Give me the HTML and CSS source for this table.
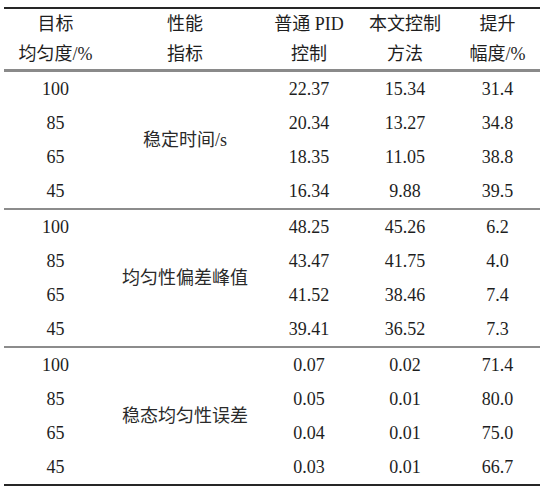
FILE: index.html
```
<!DOCTYPE html>
<html lang="zh">
<head>
<meta charset="utf-8">
<link rel="stylesheet" href="styles.css">
</head>
<body>
<table class="tbl">
  <colgroup>
    <col class="c1"><col class="c2"><col class="c3"><col class="c4"><col class="c5">
  </colgroup>
  <thead>
    <tr class="hrow">
      <th>目标<br>均匀度/%</th>
      <th>性能<br>指标</th>
      <th>普通 PID<br>控制</th>
      <th>本文控制<br>方法</th>
      <th>提升<br>幅度/%</th>
    </tr>
  </thead>
  <tbody class="grp">
    <tr><td>100</td><td rowspan="4" class="lbl">稳定时间/s</td><td>22.37</td><td>15.34</td><td>31.4</td></tr>
    <tr><td>85</td><td>20.34</td><td>13.27</td><td>34.8</td></tr>
    <tr><td>65</td><td>18.35</td><td>11.05</td><td>38.8</td></tr>
    <tr><td>45</td><td>16.34</td><td>9.88</td><td>39.5</td></tr>
  </tbody>
  <tbody class="grp">
    <tr><td>100</td><td rowspan="4" class="lbl">均匀性偏差峰值</td><td>48.25</td><td>45.26</td><td>6.2</td></tr>
    <tr><td>85</td><td>43.47</td><td>41.75</td><td>4.0</td></tr>
    <tr><td>65</td><td>41.52</td><td>38.46</td><td>7.4</td></tr>
    <tr><td>45</td><td>39.41</td><td>36.52</td><td>7.3</td></tr>
  </tbody>
  <tbody class="grp last">
    <tr><td>100</td><td rowspan="4" class="lbl">稳态均匀性误差</td><td>0.07</td><td>0.02</td><td>71.4</td></tr>
    <tr><td>85</td><td>0.05</td><td>0.01</td><td>80.0</td></tr>
    <tr><td>65</td><td>0.04</td><td>0.01</td><td>75.0</td></tr>
    <tr><td>45</td><td>0.03</td><td>0.01</td><td>66.7</td></tr>
  </tbody>
</table>
</body>
</html>
```
FILE: styles.css
```
html, body {
  margin: 0;
  padding: 0;
  background: #ffffff;
}
body {
  font-family: "Liberation Serif", "Noto Sans CJK SC", serif;
  font-size: 18px;
  color: #1e1e1e;
}
.tbl {
  margin: 7px 0 0 4px;
  width: 536px;
  border-collapse: collapse;
  table-layout: fixed;
}
.c1 { width: 103px; }
.c2 { width: 156px; }
.c3 { width: 92px; }
.c4 { width: 100px; }
.c5 { width: 85px; }
thead .hrow {
  border-top: 2px solid #262626;
  border-bottom: 3px solid #8a8a8a;
}
th {
  font-weight: normal;
  height: 60px;
  padding: 0;
  line-height: 30px;
  text-align: center;
  vertical-align: middle;
}
td {
  height: 34px;
  padding: 0;
  text-align: center;
  vertical-align: middle;
  line-height: 20px;
}
.grp {
  border-bottom: 2px solid #8c8c8c;
}
.grp.last {
  border-bottom: 2px solid #262626;
}
.lbl {
  color: #2a2a2a;
}
```
